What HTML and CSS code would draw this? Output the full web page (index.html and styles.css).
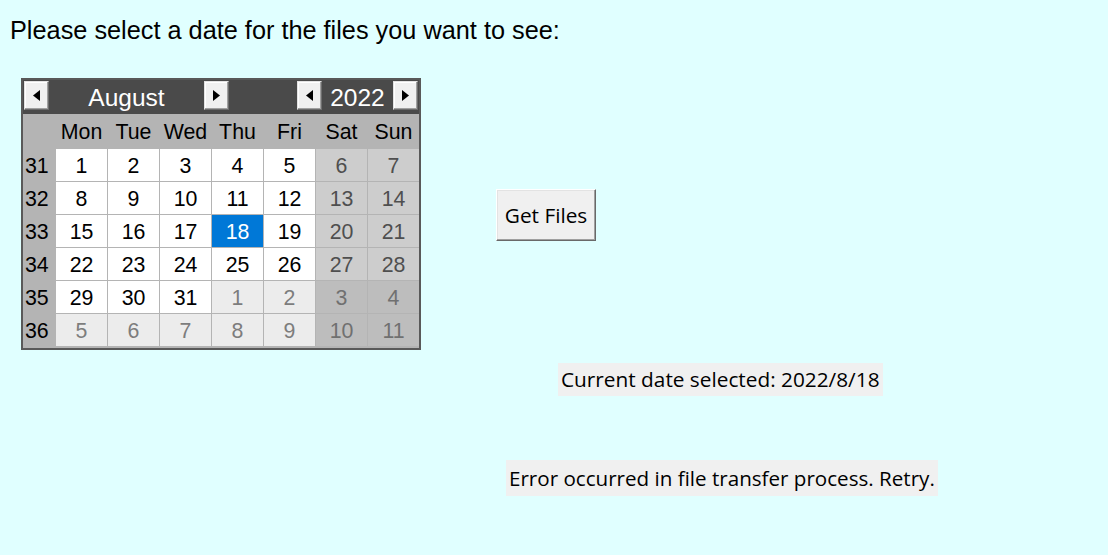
FILE: index.html
```html
<!DOCTYPE html>
<html>
<head>
<meta charset="utf-8">
<link rel="stylesheet" href="styles.css">
</head>
<body>
<div class="page">
  <p class="title">Please select a date for the files you want to see:</p>
  <div class="main">
    <div class="cal">
      <div class="cal-head">
        <div class="grp month-grp">
          <span class="arrow"><svg width="7" height="11" viewBox="0 0 7 11"><polygon points="7,0 7,11 0,5.5" fill="#000"/></svg></span>
          <span class="head-label month-label">August</span>
          <span class="arrow"><svg width="7" height="11" viewBox="0 0 7 11"><polygon points="0,0 0,11 7,5.5" fill="#000"/></svg></span>
        </div>
        <div class="grp year-grp">
          <span class="arrow"><svg width="7" height="11" viewBox="0 0 7 11"><polygon points="7,0 7,11 0,5.5" fill="#000"/></svg></span>
          <span class="head-label year-label">2022</span>
          <span class="arrow"><svg width="7" height="11" viewBox="0 0 7 11"><polygon points="0,0 0,11 7,5.5" fill="#000"/></svg></span>
        </div>
      </div>
      <div class="cal-grid">
        <span class="hd"></span><span class="hd">Mon</span><span class="hd">Tue</span><span class="hd">Wed</span><span class="hd">Thu</span><span class="hd">Fri</span><span class="hd">Sat</span><span class="hd">Sun</span>

        <span class="wk">31</span><span class="d">1</span><span class="d">2</span><span class="d">3</span><span class="d">4</span><span class="d">5</span><span class="d we">6</span><span class="d we">7</span>
        <span class="wk">32</span><span class="d">8</span><span class="d">9</span><span class="d">10</span><span class="d">11</span><span class="d">12</span><span class="d we">13</span><span class="d we">14</span>
        <span class="wk">33</span><span class="d">15</span><span class="d">16</span><span class="d">17</span><span class="d sel">18</span><span class="d">19</span><span class="d we">20</span><span class="d we">21</span>
        <span class="wk">34</span><span class="d">22</span><span class="d">23</span><span class="d">24</span><span class="d">25</span><span class="d">26</span><span class="d we">27</span><span class="d we">28</span>
        <span class="wk">35</span><span class="d">29</span><span class="d">30</span><span class="d">31</span><span class="d om">1</span><span class="d om">2</span><span class="d om-we">3</span><span class="d om-we">4</span>
        <span class="wk">36</span><span class="d om">5</span><span class="d om">6</span><span class="d om">7</span><span class="d om">8</span><span class="d om">9</span><span class="d om-we">10</span><span class="d om-we">11</span>
      </div>
    </div>
    <div class="side">
      <button class="get-btn">Get Files</button>
      <div class="lbl lbl-date">Current date selected: 2022/8/18</div>
      <div class="lbl lbl-err">Error occurred in file transfer process. Retry.</div>
    </div>
  </div>
</div>
</body>
</html>
```

FILE: styles.css
```css
html, body {
  margin: 0;
  padding: 0;
  background: #e0ffff;
  width: 1108px;
  height: 555px;
  overflow: hidden;
}

.page {
  padding-top: 18px;
}

.title {
  margin: 0 0 36px 10px;
  font-family: "Liberation Sans", Arial, sans-serif;
  font-size: 25.3px;
  line-height: 24px;
  color: #000;
  white-space: nowrap;
}

.main {
  display: flex;
  align-items: flex-start;
  padding-left: 21px;
}

.cal {
  width: 396px;
  border: 2px solid #595959;
  background: #b4b4b4;
  font-family: "Liberation Sans", Arial, sans-serif;
  font-size: 21.33px;
  padding-bottom: 2px;
}

.cal-head {
  height: 34px;
  background: #4a4a4a;
  display: flex;
  align-items: flex-start;
  padding: 1px 1px 0 1px;
  box-sizing: border-box;
}

.grp {
  display: flex;
  align-items: flex-start;
}

.month-grp {
  width: 205px;
}

.year-grp {
  margin-left: auto;
}

.arrow {
  width: 25px;
  height: 29px;
  box-sizing: border-box;
  background: #f0f0f0;
  border-style: solid;
  border-width: 1px;
  border-color: #e3e3e3 #6d6d6d #6d6d6d #e3e3e3;
  box-shadow: inset -1px -1px 0 #a0a0a0, inset 1px 1px 0 #ffffff;
  display: flex;
  align-items: center;
  justify-content: center;
  flex: none;
}

.arrow svg {
  display: block;
}

.head-label {
  color: #fff;
  font-size: 24.5px;
  line-height: 29px;
  padding-top: 2px;
  text-align: center;
}

.month-label {
  flex: 1;
}

.year-label {
  width: 71px;
}

.cal-grid {
  display: grid;
  grid-template-columns: 32px repeat(7, 51px);
  grid-template-rows: 34px repeat(6, 32px);
  column-gap: 1px;
  row-gap: 1px;
  background: #b4b4b4;
}

.cal-grid > span {
  display: flex;
  align-items: center;
  justify-content: center;
  line-height: 1;
  padding-top: 3px;
  box-sizing: border-box;
}

.hd {
  background: #b4b4b4;
  color: #000;
}

.wk {
  background: #b4b4b4;
  color: #000;
  justify-content: flex-start !important;
  padding-left: 2px;
}

.d {
  background: #ffffff;
  color: #000;
}

.d.we {
  background: #cdcdcd;
  color: #4f4f4f;
}

.d.om {
  background: #ececec;
  color: #7d7d7d;
}

.d.om-we {
  background: #bdbdbd;
  color: #707070;
}

.d.sel {
  background: #0078d7;
  color: #ffffff;
}

.side {
  display: flex;
  flex-direction: column;
  align-items: flex-start;
  margin-left: 75px;
  padding-top: 111px;
}

.get-btn {
  width: 100px;
  height: 52px;
  margin: 0;
  padding: 0;
  box-sizing: border-box;
  background: #f0f0f0;
  border-style: solid;
  border-width: 1px;
  border-color: #ffffff #696969 #696969 #ffffff;
  box-shadow: inset -1px -1px 0 #a0a0a0, inset 1px 1px 0 #e3e3e3;
  font-family: "Open Sans", "Noto Sans", sans-serif;
  font-size: 20.8px;
  color: #000;
}

.lbl {
  background: #f0f0f0;
  font-family: "Open Sans", "Noto Sans", sans-serif;
  font-size: 20.8px;
  color: #000;
  height: 33px;
  line-height: 33px;
  padding: 0 3px;
  white-space: nowrap;
}

.lbl-date {
  margin-top: 122px;
  margin-left: 62px;
}

.lbl-err {
  margin-top: 64px;
  margin-left: 10px;
  height: 36px;
  line-height: 36px;
  font-size: 20.6px;
}
```
